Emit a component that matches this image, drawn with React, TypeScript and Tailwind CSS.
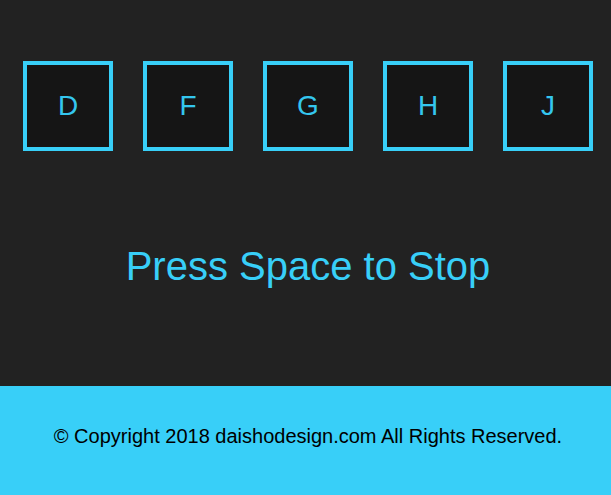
const keys = ['D', 'F', 'G', 'H', 'J'];

export default function App() {
  return (
    <div className="flex h-[495px] w-[611px] flex-col overflow-hidden bg-[#222222] font-['Liberation_Sans',Arial,sans-serif]">
      <main className="flex flex-1 flex-col">
        <div className="flex gap-[30px] pl-[23px] pt-[61px]">
          {keys.map((k) => (
            <div
              key={k}
              className="flex h-[90px] w-[90px] items-center justify-center border-4 border-[#38cff8] bg-[#151515] text-[28px] text-[#34c6ee]"
            >
              {k}
            </div>
          ))}
        </div>
        <h1 className="mt-[87px] pl-[5px] text-center text-[40px] leading-[56px] text-[#38cff8]">
          Press Space to Stop
        </h1>
      </main>
      <footer className="flex h-[109px] items-center justify-center bg-[#38cff8] pb-[9px] pl-[5px] text-[20px] text-black">
        © Copyright 2018 daishodesign.com All Rights Reserved.
      </footer>
    </div>
  );
}
